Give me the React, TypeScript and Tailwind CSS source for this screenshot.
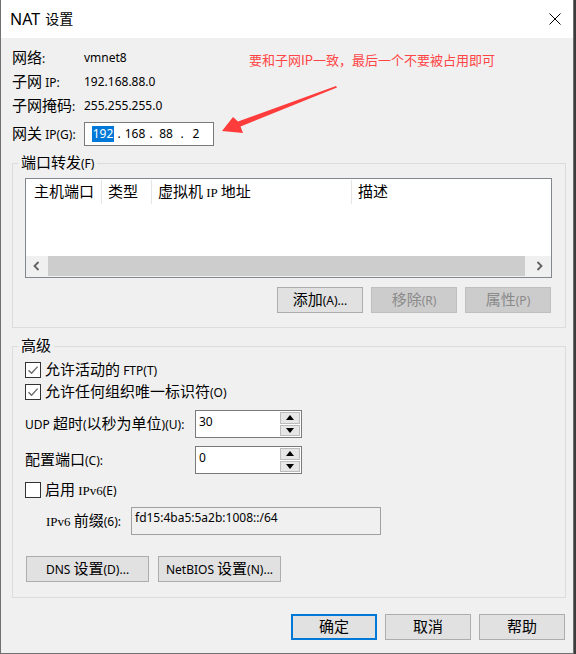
import React from 'react';

const CJK = /([\u2E80-\u9FFF\uFF00-\uFFEF]+)/;

function T({ s }: { s: string }) {
  return (
    <span className="whitespace-pre">
      {s.split(CJK).map((p, i) =>
        p === '' ? null : CJK.test(p) ? (
          <span key={i} className="text-[15px]">
            {p}
          </span>
        ) : (
          <span key={i}>{p}</span>
        )
      )}
    </span>
  );
}

function Serif({ s }: { s: string }) {
  return <span className="font-['Liberation_Serif',serif] text-[13px]">{s}</span>;
}

function Btn({
  label,
  w = 'w-[86px]',
  disabled = false,
  primary = false,
}: {
  label: string;
  w?: string;
  disabled?: boolean;
  primary?: boolean;
}) {
  const border = primary
    ? 'border-2 border-[#0078d7]'
    : disabled
    ? 'border border-[#bfbfbf]'
    : 'border border-[#adadad]';
  const bg = disabled ? 'bg-[#cccccc] text-[#8a8a8a]' : 'bg-[#e1e1e1] text-black';
  return (
    <div className={`flex h-[26px] ${w} items-center justify-center ${border} ${bg}`}>
      <T s={label} />
    </div>
  );
}

function Check({ on }: { on: boolean }) {
  return (
    <div className="flex h-[16px] w-[16px] shrink-0 items-center justify-center border border-[#333333] bg-white">
      {on && (
        <svg width="12" height="12" viewBox="0 0 12 12">
          <path d="M1.5 6.2L4.6 9.2L10.6 2.6" fill="none" stroke="#6a6a6a" strokeWidth="1.4" />
        </svg>
      )}
    </div>
  );
}

function Spin({ value }: { value: string }) {
  return (
    <div className="flex h-[28px] w-[107px] border border-[#7a7a7a] bg-white">
      <div className="flex-1 pl-[3px] pt-[1px] leading-[20px]">{value}</div>
      <div className="flex w-[21px] flex-col gap-[1px] py-[1px] pr-[1px]">
        <div className="flex flex-1 items-center justify-center border border-[#bcbcbc] bg-[#e6e6e6]">
          <svg width="8" height="5" viewBox="0 0 8 5">
            <path d="M0 5L4 0L8 5Z" fill="#000" />
          </svg>
        </div>
        <div className="flex flex-1 items-center justify-center border border-[#bcbcbc] bg-[#e6e6e6]">
          <svg width="8" height="5" viewBox="0 0 8 5">
            <path d="M0 0L8 0L4 5Z" fill="#000" />
          </svg>
        </div>
      </div>
    </div>
  );
}

export default function App() {
  return (
    <div className="h-[654px] w-[576px] bg-[#3c3c3c]">
      <div className="relative flex h-[654px] w-[574px] flex-col border-x border-b border-[#707070] bg-[#f0f0f0] font-['Noto_Sans','Noto_Sans_CJK_SC',sans-serif] text-[12px] leading-[20px] text-black">
        {/* Title bar */}
        <div className="flex h-[38px] shrink-0 items-center justify-between bg-white pl-[9px] pr-[12px]">
          <div className="flex items-center">
            <span className="text-[16px]">NAT</span>
            <span className="ml-[5px] text-[14px]">设置</span>
          </div>
          <svg width="12" height="12" viewBox="0 0 12 12">
            <path d="M0.5 0.5L11.5 11.5M11.5 0.5L0.5 11.5" stroke="#000" strokeWidth="1" />
          </svg>
        </div>

        <div className="flex flex-col pl-[11px] pt-[8px]">
          {/* info rows */}
          <div className="flex h-[24px] items-center">
            <div className="w-[72px]">
              <T s="网络:" />
            </div>
            <div>vmnet8</div>
          </div>
          <div className="flex h-[24px] items-center">
            <div className="w-[72px]">
              <T s="子网 IP:" />
            </div>
            <div>192.168.88.0</div>
          </div>
          <div className="flex h-[24px] items-center">
            <div className="w-[72px]">
              <T s="子网掩码:" />
            </div>
            <div>255.255.255.0</div>
          </div>
          <div className="mt-[4px] flex h-[24px] items-center">
            <div className="w-[72px]">
              <T s="网关 IP(G):" />
            </div>
            <div className="flex h-[24px] w-[130px] items-center border border-[#7a7a7a] bg-white">
              <span className="ml-[7px] flex h-[16px] w-[22px] items-center justify-center bg-[#0078d7] text-white">
                192
              </span>
              <span className="w-[10px] text-center">.</span>
              <span className="w-[22px] text-center">168</span>
              <span className="w-[10px] text-center">.</span>
              <span className="w-[20px] text-center">88</span>
              <span className="w-[12px] text-center">.</span>
              <span className="w-[16px] text-center">2</span>
            </div>
          </div>

          {/* 端口转发 */}
          <fieldset className="mt-[7px] w-[554px] border border-[#dcdcdc] pb-[14px]">
            <legend className="ml-[5px] flex h-[20px] items-center px-[3px]">
              <T s="端口转发(F)" />
            </legend>
            <div className="px-[12px] pt-[5px]">
              <div className="flex h-[100px] w-[527px] flex-col border border-[#828790] bg-white">
                <div className="flex h-[26px] items-center">
                  <div className="flex h-[24px] w-[76px] items-center border-r border-[#e5e5e5] pl-[8px]">
                    <T s="主机端口" />
                  </div>
                  <div className="flex h-[24px] w-[50px] items-center border-r border-[#e5e5e5] pl-[6px]">
                    <T s="类型" />
                  </div>
                  <div className="flex h-[24px] w-[200px] items-center border-r border-[#e5e5e5] pl-[6px]">
                    <span className="whitespace-pre">
                      <span className="text-[15px]">虚拟机</span> <Serif s="IP" />{' '}
                      <span className="text-[15px]">地址</span>
                    </span>
                  </div>
                  <div className="flex h-[24px] items-center pl-[6px]">
                    <T s="描述" />
                  </div>
                </div>
                <div className="flex-1" />
                <div className="flex h-[21px] bg-[#f0f0f0] pb-[1px]">
                  <div className="flex w-[21px] items-center justify-center">
                    <svg width="7" height="10" viewBox="0 0 7 10">
                      <path d="M5.5 1L1.5 5L5.5 9" fill="none" stroke="#606060" strokeWidth="1.8" />
                    </svg>
                  </div>
                  <div className="ml-[1px] w-[477px] bg-[#cdcdcd]" />
                  <div className="flex flex-1 items-center justify-center pl-[2px]">
                    <svg width="7" height="10" viewBox="0 0 7 10">
                      <path d="M1.5 1L5.5 5L1.5 9" fill="none" stroke="#606060" strokeWidth="1.8" />
                    </svg>
                  </div>
                </div>
              </div>
              <div className="mt-[9px] flex w-[527px] justify-end gap-[8px] pr-[1px]">
                <Btn label="添加(A)..." />
                <Btn label="移除(R)" disabled />
                <Btn label="属性(P)" disabled />
              </div>
            </div>
          </fieldset>

          {/* 高级 */}
          <fieldset className="mt-[8px] w-[554px] border border-[#dcdcdc] pb-[15px]">
            <legend className="ml-[5px] flex h-[20px] items-center px-[3px]">
              <T s="高级" />
            </legend>
            <div className="px-[12px] pt-[3px]">
              <div className="flex h-[22px] items-center">
                <Check on />
                <span className="ml-[4px] flex items-center">
                  <T s="允许活动的 FTP(T)" />
                </span>
              </div>
              <div className="flex h-[22px] items-center">
                <Check on />
                <span className="ml-[4px] flex items-center">
                  <T s="允许任何组织唯一标识符(O)" />
                </span>
              </div>
              <div className="mt-[7px] flex items-center">
                <div className="w-[170px]">
                  <T s="UDP 超时(以秒为单位)(U):" />
                </div>
                <Spin value="30" />
              </div>
              <div className="mt-[8px] flex items-center">
                <div className="w-[170px]">
                  <T s="配置端口(C):" />
                </div>
                <Spin value="0" />
              </div>
              <div className="mt-[5px] flex h-[22px] items-center">
                <Check on={false} />
                <span className="ml-[4px] whitespace-pre">
                  <span className="text-[15px]">启用</span> <Serif s="IPv6" />
                  <span>(E)</span>
                </span>
              </div>
              <div className="mt-[6px] flex items-center pl-[21px]">
                <div className="w-[85px] whitespace-pre">
                  <Serif s="IPv6" /> <span className="text-[15px]">前缀</span>
                  <span>(6):</span>
                </div>
                <div className="h-[28px] w-[250px] border border-[#a0a0a0] bg-[#f0f0f0] pl-[3px] leading-[20px]">
                  fd15:4ba5:5a2b:1008::/64
                </div>
              </div>
              <div className="mt-[21px] flex gap-[9px] pl-[1px]">
                <Btn label="DNS 设置(D)..." w="w-[123px]" />
                <Btn label="NetBIOS 设置(N)..." w="w-[123px]" />
              </div>
            </div>
          </fieldset>

          {/* bottom buttons */}
          <div className="mt-[16px] flex justify-end gap-[8px] pr-[8px]">
            <Btn label="确定" primary />
            <Btn label="取消" />
            <Btn label="帮助" />
          </div>
        </div>

        {/* annotation overlay */}
        <div className="absolute left-[248px] top-[50px] font-['Noto_Sans_CJK_SC',sans-serif] text-[13px] leading-[20px] text-[#ff4545]">
          要和子网IP一致，最后一个不要被占用即可
        </div>
        <svg
          className="pointer-events-none absolute left-[214px] top-[80px]"
          width="130"
          height="60"
          viewBox="0 0 130 60"
        >
          <polygon points="7,51 18,37 23,41.5 121,6 122,7.5 25.5,46.5 28,53" fill="#ff3c3c" />
        </svg>
      </div>
    </div>
  );
}
